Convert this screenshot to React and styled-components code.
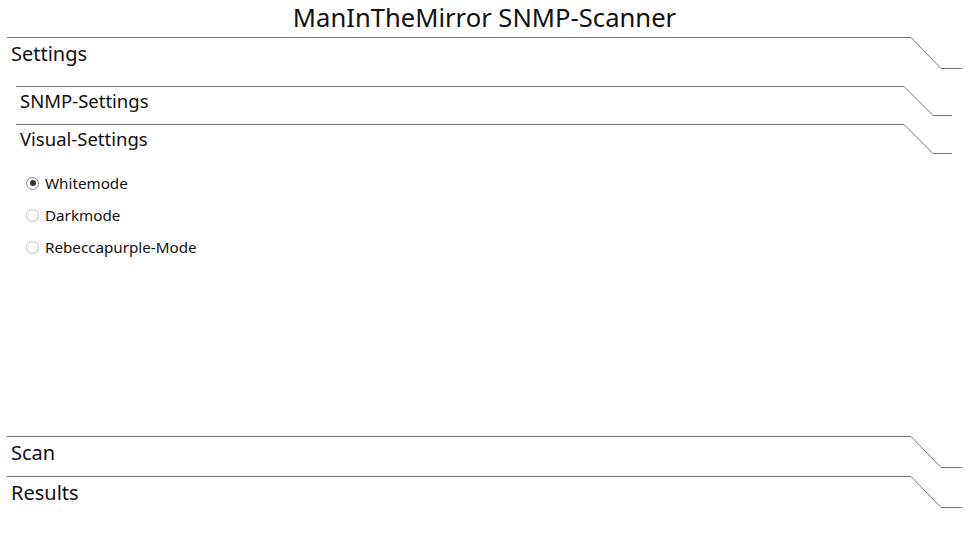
import React, { useState } from "react";
import styled, { createGlobalStyle } from "styled-components";

const Global = createGlobalStyle`
  html, body { margin: 0; padding: 0; background: #fff; }
  body { font-family: "Noto Sans", "Open Sans", sans-serif; color: #111; }
`;

const Page = styled.div`
  padding: 0 6px 0 7px;
`;

const Title = styled.h1`
  margin: 0;
  height: 37px;
  font-size: 25.6px;
  font-weight: 400;
  line-height: 35px;
  text-align: center;
  color: #111;
`;

const Section = styled.section`
  display: flex;
  flex-direction: column;
  padding-bottom: ${(p) => p.$gap}px;
`;

const Header = styled.div`
  display: flex;
  align-items: flex-start;
  height: ${(p) => p.$h}px;
`;

const Label = styled.div`
  flex: 1;
  border-top: 1px solid #777;
  padding-left: 4px;
  padding-top: ${(p) => p.$pt}px;
  font-size: ${(p) => p.$fs}px;
  line-height: 1.2;
`;

const Slant = styled.svg`
  display: block;
  flex: none;
`;

const Body = styled.div`
  height: ${(p) => p.$h}px;
  padding: 17px 10px 0 9px;
  box-sizing: border-box;
`;

const RadioList = styled.div`
  display: flex;
  flex-direction: column;
  gap: 12px;
  padding: 19px 0 0 10px;
`;

const RadioRow = styled.label`
  display: flex;
  align-items: center;
  gap: 6px;
  height: 20px;
  font-size: 15.2px;
  cursor: pointer;
`;

const RadioDot = styled.span`
  width: 13px;
  height: 13px;
  border-radius: 50%;
  box-sizing: border-box;
  border: 1px solid ${(p) => (p.$on ? "#888" : "#bbb")};
  display: flex;
  align-items: center;
  justify-content: center;
  &::after {
    content: "";
    width: 6px;
    height: 6px;
    border-radius: 50%;
    background: ${(p) => (p.$on ? "#333" : "transparent")};
  }
`;

function Heading({ text, level }) {
  const top = level === 0;
  const w = top ? 51 : 48;
  const h = top ? 32 : 30;
  const dx = top ? 30 : 29;
  const dy = top ? 31 : 29;
  return (
    <Header $h={h}>
      <Label $fs={top ? 20 : 18.5} $pt={top ? 4 : 3}>{text}</Label>
      <Slant width={w} height={h} viewBox={`0 0 ${w} ${h}`}>
        <path d={`M0 0.5 L${dx} ${dy + 0.5} L${w} ${dy + 0.5}`} fill="none" stroke="#777" strokeWidth="1" />
      </Slant>
    </Header>
  );
}

const modes = ["Whitemode", "Darkmode", "Rebeccapurple-Mode"];

export default function App() {
  const [mode, setMode] = useState("Whitemode");
  return (
    <Page>
      <Global />
      <Title>ManInTheMirror SNMP-Scanner</Title>
      <Section $gap={0}>
        <Heading text="Settings" level={0} />
        <Body $h={367}>
          <Section $gap={8}>
            <Heading text="SNMP-Settings" level={1} />
          </Section>
          <Section $gap={0}>
            <Heading text="Visual-Settings" level={1} />
            <RadioList>
              {modes.map((m) => (
                <RadioRow key={m} onClick={() => setMode(m)}>
                  <RadioDot $on={mode === m} />
                  {m}
                </RadioRow>
              ))}
            </RadioList>
          </Section>
        </Body>
      </Section>
      <Section $gap={8}>
        <Heading text="Scan" level={0} />
      </Section>
      <Section $gap={8}>
        <Heading text="Results" level={0} />
      </Section>
    </Page>
  );
}
